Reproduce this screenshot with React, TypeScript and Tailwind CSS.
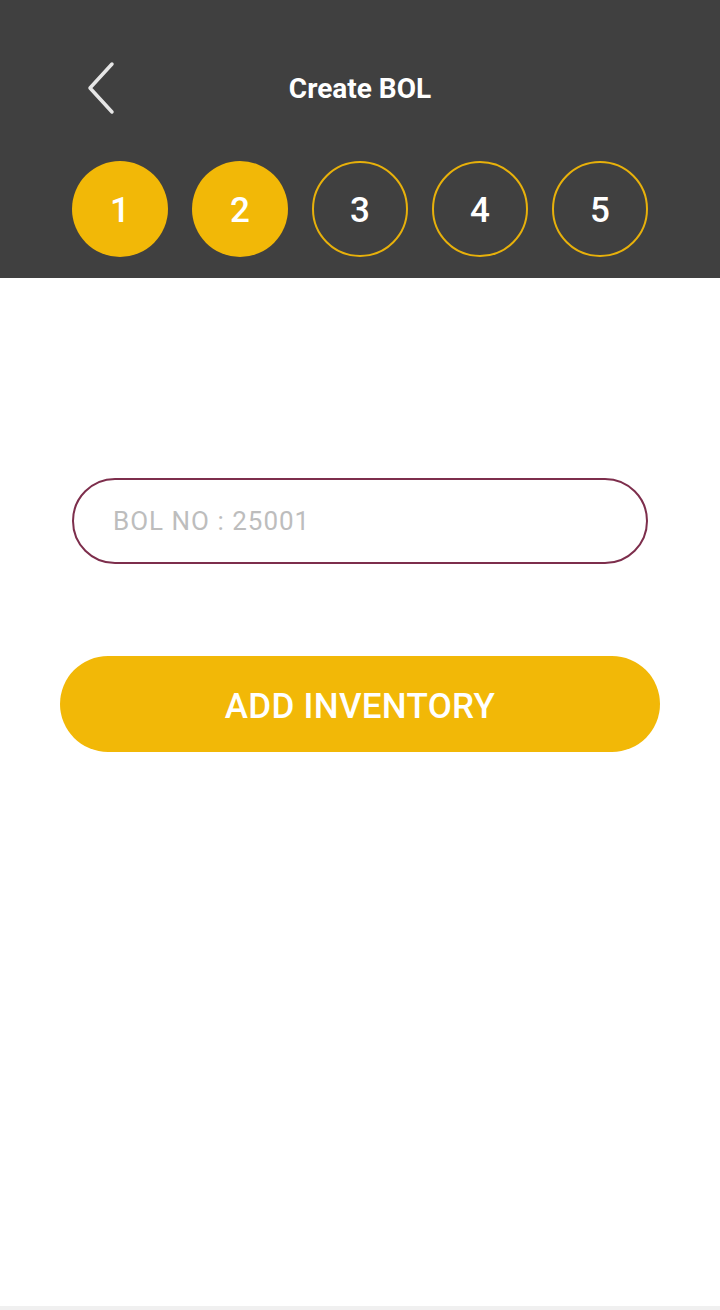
import React from "react";

const steps = [1, 2, 3, 4, 5];
const current = 2;

const App: React.FC = () => {
  return (
    <div className="flex h-[1310px] w-[720px] flex-col bg-white font-['Roboto',sans-serif]">
      <header className="flex h-[278px] flex-col bg-[#404040]">
        <div className="grid h-[161px] grid-cols-[1fr_auto_1fr] items-center pt-[17px]">
          <div className="pl-[82px]">
            <button className="p-1">
              <svg width="30" height="54" viewBox="0 0 30 54" fill="none" className="block">
                <path d="M26 3 L4 27 L26 51" stroke="#e6e6e6" strokeWidth="3.5" strokeLinecap="round" strokeLinejoin="round" />
              </svg>
            </button>
          </div>
          <h1 className="text-[28px] font-bold text-white">Create BOL</h1>
          <div />
        </div>
        <div className="flex justify-center gap-6">
          {steps.map((n) => (
            <div
              key={n}
              className={
                n <= current
                  ? "flex h-[96px] w-[96px] items-center justify-center rounded-full bg-[#f2b807] pt-[4px] text-[35px] font-medium text-white"
                  : "flex h-[96px] w-[96px] items-center justify-center rounded-full border-2 border-[#e8b10a] pt-[4px] text-[35px] font-medium text-white"
              }
            >
              {n}
            </div>
          ))}
        </div>
      </header>

      <main className="flex flex-1 flex-col items-center">
        <input
          className="mt-[200px] h-[86px] w-[576px] rounded-full border-2 border-[#7d2e4c] px-[39px] text-[26px] tracking-[1px] text-gray-700 outline-none placeholder:text-[#bdbdbd]"
          placeholder="BOL NO : 25001"
        />
        <button className="mt-[92px] h-[96px] w-[600px] rounded-full bg-[#f2b807] pt-[7px] text-[35px] font-medium tracking-[0.3px] text-white">
          ADD INVENTORY
        </button>
      </main>
      <div className="h-[4px] bg-[#f0f0f0]" />
    </div>
  );
};

export default App;
